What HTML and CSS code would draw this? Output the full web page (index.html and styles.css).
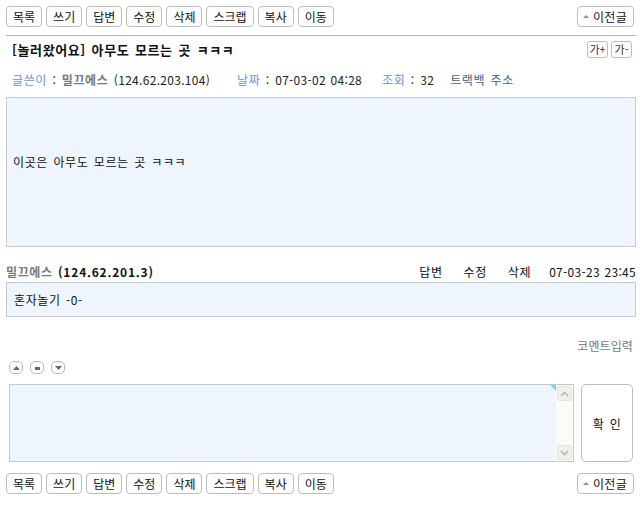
FILE: index.html
```html
<!DOCTYPE html>
<html lang="ko">
<head>
<meta charset="utf-8">
<title>아무도 모르는 곳</title>
<link rel="stylesheet" href="styles.css">
</head>
<body>
<div class="page">
  <div class="toolbar">
    <div class="btns">
      <span class="btn">목록</span><span class="btn">쓰기</span><span class="btn">답변</span><span class="btn">수정</span><span class="btn">삭제</span><span class="btn">스크랩</span><span class="btn">복사</span><span class="btn">이동</span>
    </div>
    <span class="btn prev"><span class="tri"></span>이전글</span>
  </div>
  <div class="rule"></div>
  <div class="title-row">
    <span class="title">[놀러왔어요] 아무도 모르는 곳 ㅋㅋㅋ</span>
    <span class="sizes"><span class="sz">가+</span><span class="sz">가-</span></span>
  </div>
  <div class="meta">
    <span class="mi"><span class="lbl">글쓴이</span> : <b class="nick">밀끄에스</b> <span class="num">(124.62.203.104)</span></span>
    <span class="mi m2"><span class="lbl">날짜</span> : <span class="num">07-03-02 04:28</span></span>
    <span class="mi m3"><span class="lbl">조회</span> : <span class="num">32</span></span>
    <span class="mi m4 tb">트랙백 주소</span>
  </div>
  <div class="content">이곳은 아무도 모르는 곳 ㅋㅋㅋ</div>
  <div class="c-head">
    <span><b class="nick">밀끄에스</b> <b class="num wide">(124.62.201.3)</b></span>
    <span class="c-acts"><span>답변</span><span>수정</span><span>삭제</span><span class="c-date num">07-03-23 23:45</span></span>
  </div>
  <div class="c-body">혼자놀기 -0-</div>
  <div class="c-input-lbl">코멘트입력</div>
  <div class="votes">
    <span class="vote"><svg width="9" height="6" viewBox="0 0 9 6"><path d="M4.5 1 L8 5 L1 5 Z" fill="#666"/></svg></span>
    <span class="vote"><svg width="9" height="6" viewBox="0 0 9 6"><rect x="2" y="2" width="5" height="3" fill="#666"/></svg></span>
    <span class="vote"><svg width="9" height="6" viewBox="0 0 9 6"><path d="M1 1 L8 1 L4.5 5 Z" fill="#666"/></svg></span>
  </div>
  <div class="c-form">
    <div class="ta">
      <div class="ta-area"><span class="corner"></span></div>
      <div class="sb">
        <span class="sb-btn"><svg width="9" height="6" viewBox="0 0 9 6"><path d="M1 5 L4.5 1.5 L8 5" fill="none" stroke="#b8b8b0" stroke-width="1.6"/></svg></span>
        <span class="sb-btn"><svg width="9" height="6" viewBox="0 0 9 6"><path d="M1 1 L4.5 4.5 L8 1" fill="none" stroke="#b8b8b0" stroke-width="1.6"/></svg></span>
      </div>
    </div>
    <span class="ok">확 인</span>
  </div>
  <div class="toolbar bottom">
    <div class="btns">
      <span class="btn">목록</span><span class="btn">쓰기</span><span class="btn">답변</span><span class="btn">수정</span><span class="btn">삭제</span><span class="btn">스크랩</span><span class="btn">복사</span><span class="btn">이동</span>
    </div>
    <span class="btn prev"><span class="tri"></span>이전글</span>
  </div>
</div>
</body>
</html>
```

FILE: styles.css
```css
* { box-sizing: border-box; }
html, body { margin: 0; background: #fff; }
body {
  font-family: "Noto Sans CJK KR", "DejaVu Sans", sans-serif;
  font-size: 12px;
  color: #111;
  letter-spacing: 0.6px;
  word-spacing: 1.5px;
}
.num { letter-spacing: 0.3px; word-spacing: 1px; }
.num.wide { letter-spacing: 0.8px; }
.page { padding: 6px 6px 0 6px; width: 642px; }
.toolbar { display: flex; justify-content: space-between; align-items: center; height: 21px; }
.btns { display: flex; gap: 4px; }
.btn {
  display: inline-flex; align-items: center; justify-content: center;
  height: 21px; padding: 0 6px;
  border: 1px solid #bcbcbc; border-radius: 4px; background: #fff;
  font-size: 12px; line-height: 1; color: #111; letter-spacing: 0;
}
.prev { margin-right: 2px; padding: 0 6px 0 5px; letter-spacing: 0.3px; }
.tri {
  width: 0; height: 0; border-left: 3px solid transparent; border-right: 3px solid transparent;
  border-bottom: 3px solid #8a88d8; margin-right: 4px;
}
.rule { height: 1px; background: #b4b4b4; margin-top: 8px; }
.title-row { display: flex; justify-content: space-between; align-items: center; height: 16px; margin-top: 5px; }
.title { font-size: 13px; font-weight: bold; padding-left: 6px; }
.sizes { display: flex; gap: 3px; margin-right: 4px; }
.sz {
  display: inline-flex; align-items: center; justify-content: center;
  width: 21px; height: 17px; border: 1px solid #bdbdbd; border-radius: 3px;
  font-size: 11px; line-height: 1; color: #333; letter-spacing: 0;
}
.meta { display: flex; padding-left: 6px; margin-top: 14px; height: 16px; align-items: center; font-size: 12px; color: #222; }
.m2 { margin-left: 27px; }
.m3 { margin-left: 20px; }
.m4 { margin-left: 16px; }
.lbl { color: #6f8ed6; }
.nick { color: #777; }
.tb { color: #3e6591; }
.content {
  margin-top: 10px; height: 150px;
  background: #eef5fd; border: 1px solid #c9c9c9;
  padding: 57px 0 0 6px; font-size: 12px; line-height: 14px;
}
.c-head { display: flex; justify-content: space-between; align-items: center; height: 14px; margin-top: 17px; font-size: 12px; }
.c-acts { display: flex; gap: 21px; }
.c-acts .c-date { margin-left: -3px; }
.c-body {
  margin-top: 4px; height: 35px;
  background: #eef5fd; border: 1px solid #c9c9c9;
  padding: 10px 0 0 7px; font-size: 12px; line-height: 14px;
}
.c-input-lbl { text-align: right; color: #777; margin-top: 22px; padding-right: 3px; height: 14px; line-height: 14px; letter-spacing: 0.1px; }
.votes { display: flex; gap: 7px; margin-top: 8px; padding-left: 3px; height: 14px; }
.vote {
  display: inline-flex; align-items: center; justify-content: center;
  width: 14px; height: 13px; border: 1px solid #b8b8b8; border-radius: 5px;
}
.c-form { display: flex; gap: 7px; margin-top: 9px; padding-left: 3px; padding-right: 3px; height: 78px; }
.ta { flex: 1; display: flex; border: 1px solid #c7c7c7; background: #eef5fd; }
.ta-area { flex: 1; position: relative; }
.corner {
  position: absolute; right: 0; top: 0; width: 0; height: 0;
  border-top: 6px solid #7fd0f5; border-left: 6px solid transparent;
}
.sb { width: 17px; background: #fcfcf6; display: flex; flex-direction: column; justify-content: space-between; padding: 1px 0; }
.sb-btn {
  display: flex; align-items: center; justify-content: center;
  height: 15px; margin: 0 1px; background: #f0efe8; border: 1px solid #e4e3dc; border-radius: 2px;
}
.ok {
  width: 52px; display: flex; align-items: center; justify-content: center;
  border: 1px solid #bcbcbc; border-radius: 5px; font-size: 12px;
}
.bottom { margin-top: 11px; }
```
